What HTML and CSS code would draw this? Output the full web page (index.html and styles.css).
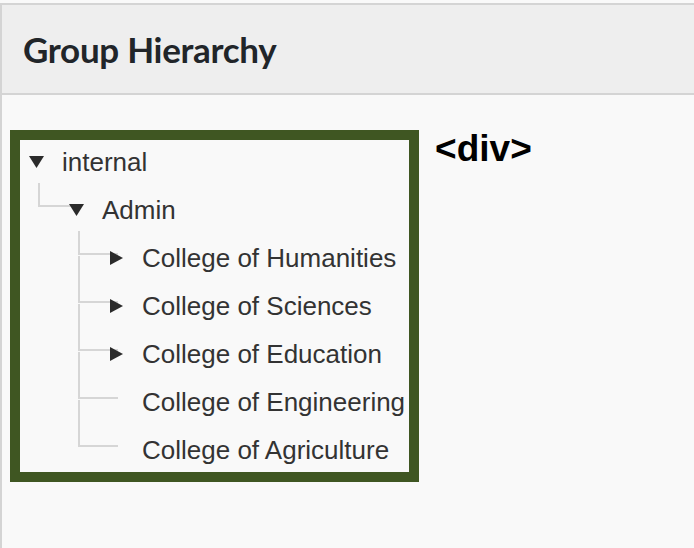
FILE: index.html
```html
<!DOCTYPE html>
<html>
<head>
<meta charset="utf-8">
<title>Group Hierarchy</title>
<link rel="stylesheet" href="styles.css">
</head>
<body>
<div class="panel">
  <div class="panel-header">
    <h1 class="title">Group Hierarchy</h1>
  </div>
  <div class="panel-body">
    <div class="tree-box">
      <ul class="tree">
        <li class="node">
          <div class="row"><svg class="caret" viewBox="0 0 15 14"><polygon points="0,1 15,1 7.5,13"/></svg><span class="label">internal</span></div>
          <ul class="children">
            <li class="node child">
              <div class="row"><svg class="caret" viewBox="0 0 15 14"><polygon points="0,1 15,1 7.5,13"/></svg><span class="label">Admin</span></div>
              <ul class="children">
                <li class="node child"><div class="row"><svg class="caret" viewBox="0 0 15 14"><polygon points="1,0 14,7 1,14"/></svg><span class="label">College of Humanities</span></div></li>
                <li class="node child"><div class="row"><svg class="caret" viewBox="0 0 15 14"><polygon points="1,0 14,7 1,14"/></svg><span class="label">College of Sciences</span></div></li>
                <li class="node child"><div class="row"><svg class="caret" viewBox="0 0 15 14"><polygon points="1,0 14,7 1,14"/></svg><span class="label">College of Education</span></div></li>
                <li class="node child"><div class="row"><span class="caret"></span><span class="label">College of Engineering</span></div></li>
                <li class="node child"><div class="row"><span class="caret"></span><span class="label">College of Agriculture</span></div></li>
              </ul>
            </li>
          </ul>
        </li>
      </ul>
    </div>
    <div class="tag-label">&lt;div&gt;</div>
  </div>
</div>
</body>
</html>
```

FILE: styles.css
```css
html, body {
  margin: 0;
  padding: 0;
  background: #f9f9f9;
}

body {
  height: 548px;
  overflow: hidden;
  font-family: "Liberation Sans", Arial, sans-serif;
}

.panel {
  margin-top: 3px;
  border-top: 2px solid #d4d4d4;
  border-left: 2px solid #d4d4d4;
  min-height: 545px;
  box-sizing: border-box;
}

.panel-header {
  height: 88px;
  background: #eeeeee;
  border-bottom: 2px solid #d4d4d4;
  display: flex;
  align-items: center;
  padding-left: 21px;
}

.title {
  margin: 0;
  font-family: Lato, "Open Sans", sans-serif;
  font-weight: 700;
  font-size: 35px;
  line-height: 1.2;
  color: #212529;
  letter-spacing: -0.3px;
}

.panel-body {
  display: flex;
  align-items: flex-start;
  padding: 35px 0 0 8px;
}

.tree-box {
  border: 10px solid #3f5622;
  background: #f9f9f9;
  padding-right: 4px;
}

.tree {
  list-style: none;
  margin: -2px 0 -2px 0;
  padding: 0;
  font-size: 26px;
  color: #333333;
}

.children {
  list-style: none;
  margin: 0;
  padding: 0 0 0 40px;
}

.node {
  position: relative;
}

.row {
  height: 48px;
  display: flex;
  align-items: center;
  white-space: nowrap;
}

.caret {
  display: block;
  width: 15px;
  height: 14px;
  margin-left: 9px;
  position: relative;
  z-index: 1;
  flex: none;
  fill: #2b2b2b;
}

.label {
  margin-left: 18px;
  line-height: 48px;
}

.child::before {
  content: "";
  position: absolute;
  left: -22px;
  top: -3px;
  width: 40px;
  height: 24px;
  border-left: 2px solid #d6d6d6;
  border-bottom: 2px solid #d6d6d6;
  box-sizing: border-box;
  z-index: 0;
}

.child + .child::before {
  top: -26px;
  height: 47px;
}

.tag-label {
  margin-left: 16px;
  font-family: "Liberation Sans", Arial, sans-serif;
  font-weight: 700;
  font-size: 37px;
  line-height: 1;
  color: #000000;
}
```
